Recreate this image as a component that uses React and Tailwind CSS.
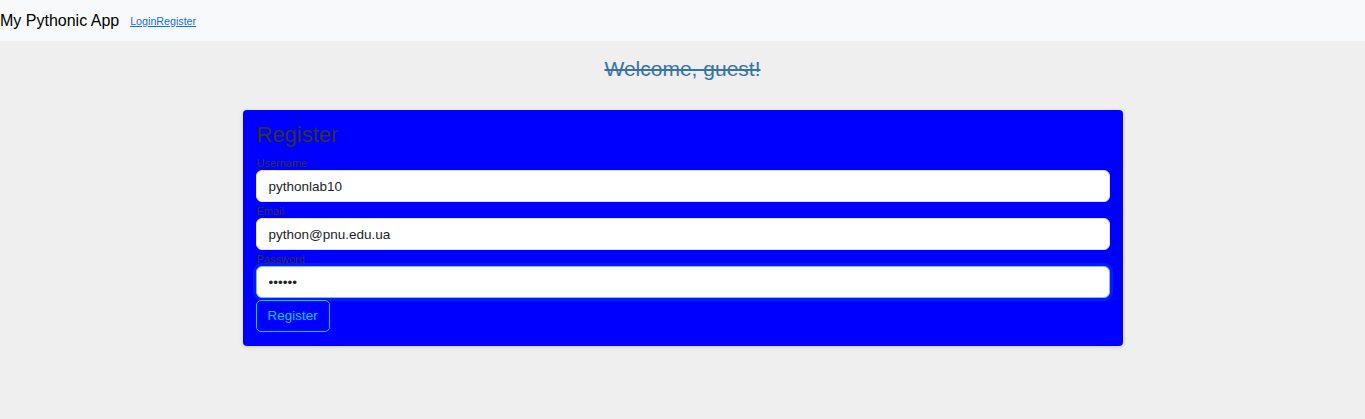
import React, { useState } from 'react';

function Field({ label, type = 'text', value, onChange, focused }) {
  return (
    <div className="flex flex-col">
      <label className="pl-[1px] pt-[1px] text-[11px] leading-[13px] text-[#333]">{label}</label>
      <input
        type={type}
        value={value}
        onChange={(e) => onChange(e.target.value)}
        className={
          'h-[32px] w-full rounded-[6px] bg-white px-[12px] text-[13.5px] text-[#212529] outline-none border ' +
          (focused ? 'border-[#86b7fe] shadow-[0_0_0_3px_rgba(13,110,253,0.25)]' : 'border-[#dee2e6]')
        }
      />
    </div>
  );
}

export default function App() {
  const [username, setUsername] = useState('pythonlab10');
  const [email, setEmail] = useState('python@pnu.edu.ua');
  const [password, setPassword] = useState('secret');

  return (
    <div className="min-h-[419px] bg-[#efefef] font-['Liberation_Sans',Arial,sans-serif]">
      <nav className="flex h-[41px] items-center bg-[#f8f9fa]">
        <span className="text-[16px] text-black">My Pythonic App</span>
        <div className="ml-[11px] flex pt-[1px] text-[10.7px]">
          <a href="#" className="text-[#0d6efd] underline">Login</a>
          <a href="#" className="text-[#0d6efd] underline">Register</a>
        </div>
      </nav>

      <h2 className="mt-[16px] text-center text-[21px] leading-[24px] text-[#3873a8] line-through">
        Welcome, guest!
      </h2>

      <div className="mx-auto mt-[29px] w-[880px] rounded-[4px] bg-[#0000ff] px-[13px] pt-[12px] pb-[14px] shadow-[0_1px_4px_rgba(0,0,0,0.15)]">
        <h3 className="pl-[1px] text-[22px] leading-[26px] text-[#333]">Register</h3>
        <form onSubmit={(e) => e.preventDefault()} className="mt-[8px] flex flex-col gap-[2px]">
          <Field label="Username" value={username} onChange={setUsername} />
          <Field label="Email" type="email" value={email} onChange={setEmail} />
          <Field label="Password" type="password" value={password} onChange={setPassword} focused />
          <div>
            <button
              type="submit"
              className="h-[32px] rounded-[5px] border border-[#0dcaf0] px-[11px] text-[13.5px] text-[#0dcaf0]"
            >
              Register
            </button>
          </div>
        </form>
      </div>
    </div>
  );
}
